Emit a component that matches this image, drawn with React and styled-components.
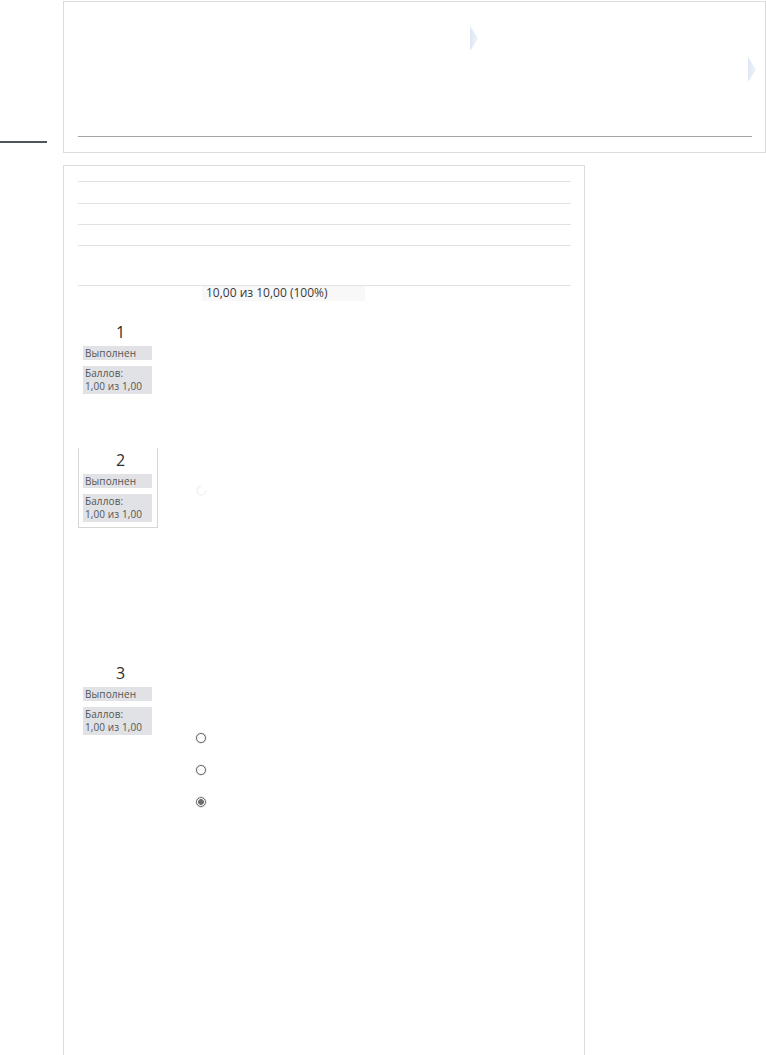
import React from "react";
import styled, { createGlobalStyle } from "styled-components";

const Global = createGlobalStyle`
  *, *::before, *::after { box-sizing: border-box; }
  html, body { margin: 0; padding: 0; background: #fff; overflow: hidden; }
  body { font-family: "Open Sans", "Noto Sans", sans-serif; color: #333; }
`;

const Page = styled.div`
  padding-top: 1px;
  display: flex;
  flex-direction: column;
  height: 1055px;
`;

const TopRow = styled.div`
  display: flex;
  align-items: flex-start;
`;

const Side = styled.div`
  width: 63px;
  flex: none;
  padding-top: 140px;
`;

const SideRule = styled.div`
  width: 47px;
  height: 2px;
  background: #50555b;
`;

const Banner = styled.div`
  width: 703px;
  height: 152px;
  border: 1px solid #dcdcdc;
  display: flex;
  flex-direction: column;
`;

const ArrowArea = styled.div`
  height: 134px;
  display: flex;
  align-items: flex-start;
`;

const Arrow = styled.svg`
  flex: none;
  margin-top: ${(p) => p.$top}px;
  margin-left: ${(p) => p.$left};
  margin-right: ${(p) => p.$right || 0}px;
`;

const BannerRule = styled.div`
  height: 1px;
  background: #a3a3a3;
  margin: 0 13px 0 14px;
`;

const Panel = styled.div`
  margin: 12px 0 0 63px;
  width: 522px;
  flex: 1;
  border: 1px solid #dcdcdc;
  border-bottom: none;
  padding: 15px 13px 0 14px;
`;

const Summary = styled.div`
  display: flex;
  flex-direction: column;
`;

const SumRow = styled.div`
  border-top: 1px solid #e2e2e2;
  height: ${(p) => p.$h}px;
  display: flex;
`;

const SumHead = styled.div`
  width: 124px;
  flex: none;
`;

const SumValue = styled.div`
  width: 163px;
  padding-left: 4px;
  background: #f8f8f8;
  font-size: 12px;
  line-height: 14px;
  color: #3a3a3a;
  white-space: nowrap;
`;

const Questions = styled.div`
  margin-top: 19px;
  display: flex;
  flex-direction: column;
`;

const Question = styled.div`
  display: flex;
  align-items: flex-start;
  min-height: ${(p) => p.$h}px;
`;

const Info = styled.div`
  width: 80px;
  flex: none;
  padding: 1px 5px 5px 4px;
  border: 1px solid ${(p) => (p.$boxed ? "#d6d6d6" : "transparent")};
  border-top: none;
  display: flex;
  flex-direction: column;
`;

const QNum = styled.div`
  font-size: 16px;
  line-height: 22px;
  text-align: center;
  color: #2e2e2e;
  margin-left: 6px;
`;

const Tag = styled.div`
  background: #e0e2e6;
  color: #555;
  font-size: 10px;
  letter-spacing: 0.1px;
  line-height: ${(p) => (p.$lh ? p.$lh : 13)}px;
  padding: ${(p) => (p.$pad ? p.$pad : "1px 2px")};
  margin-top: ${(p) => p.$mt}px;
`;

const Content = styled.div`
  margin-left: 38px;
  padding-top: ${(p) => p.$pt}px;
  display: flex;
  flex-direction: column;
  gap: 22px;
`;

const Radio = styled.span`
  display: block;
  width: 10px;
  height: 10px;
  border-radius: 50%;
  border: 1px solid #6a6a6a;
  background: ${(p) => (p.$checked ? "radial-gradient(circle, #6e6e6e 0 2.6px, #fff 3.2px)" : "#fff")};
  box-shadow: 0 0 0 0.5px #d0d0d0;
`;

const Spinner = () => (
  <svg width="11" height="11" viewBox="0 0 11 11">
    <path d="M5.5 1 A4.5 4.5 0 1 0 10 5.5" fill="none" stroke="#ececec" strokeWidth="1.2" />
  </svg>
);

const Chevron = (props) => (
  <Arrow width="9" height="25" viewBox="0 0 9 25" {...props}>
    <defs>
      <linearGradient id={`g${props.$top}`} x1="0" y1="0" x2="1" y2="0">
        <stop offset="0" stopColor="#dde7f3" />
        <stop offset="1" stopColor="#eef3f9" />
      </linearGradient>
    </defs>
    <polygon points="0,0 8,12.5 0,25" fill={`url(#g${props.$top})`} />
  </Arrow>
);

const InfoBlock = ({ n, boxed }) => (
  <Info $boxed={boxed}>
    <QNum>{n}</QNum>
    <Tag $mt={3} $lh={14} $pad="0 2px">Выполнен</Tag>
    <Tag $mt={6}>
      Баллов:
      <br />
      1,00 из 1,00
    </Tag>
  </Info>
);

export default function App() {
  return (
    <>
      <Global />
      <Page>
        <TopRow>
          <Side>
            <SideRule />
          </Side>
          <Banner>
            <ArrowArea>
              <Chevron $top={24} $left="406px" />
              <Chevron $top={55} $left="auto" $right={8} />
            </ArrowArea>
            <BannerRule />
          </Banner>
        </TopRow>
        <Panel>
          <Summary>
            <SumRow $h={22} />
            <SumRow $h={21} />
            <SumRow $h={21} />
            <SumRow $h={40} />
            <SumRow $h={16}>
              <SumHead />
              <SumValue>10,00 из 10,00 (100%)</SumValue>
            </SumRow>
          </Summary>
          <Questions>
            <Question $h={128}>
              <InfoBlock n="1" />
            </Question>
            <Question $h={213}>
              <InfoBlock n="2" boxed />
              <Content $pt={37}>
                <Spinner />
              </Content>
            </Question>
            <Question $h={300}>
              <InfoBlock n="3" />
              <Content $pt={72}>
                <Radio />
                <Radio />
                <Radio $checked />
              </Content>
            </Question>
          </Questions>
        </Panel>
      </Page>
    </>
  );
}
